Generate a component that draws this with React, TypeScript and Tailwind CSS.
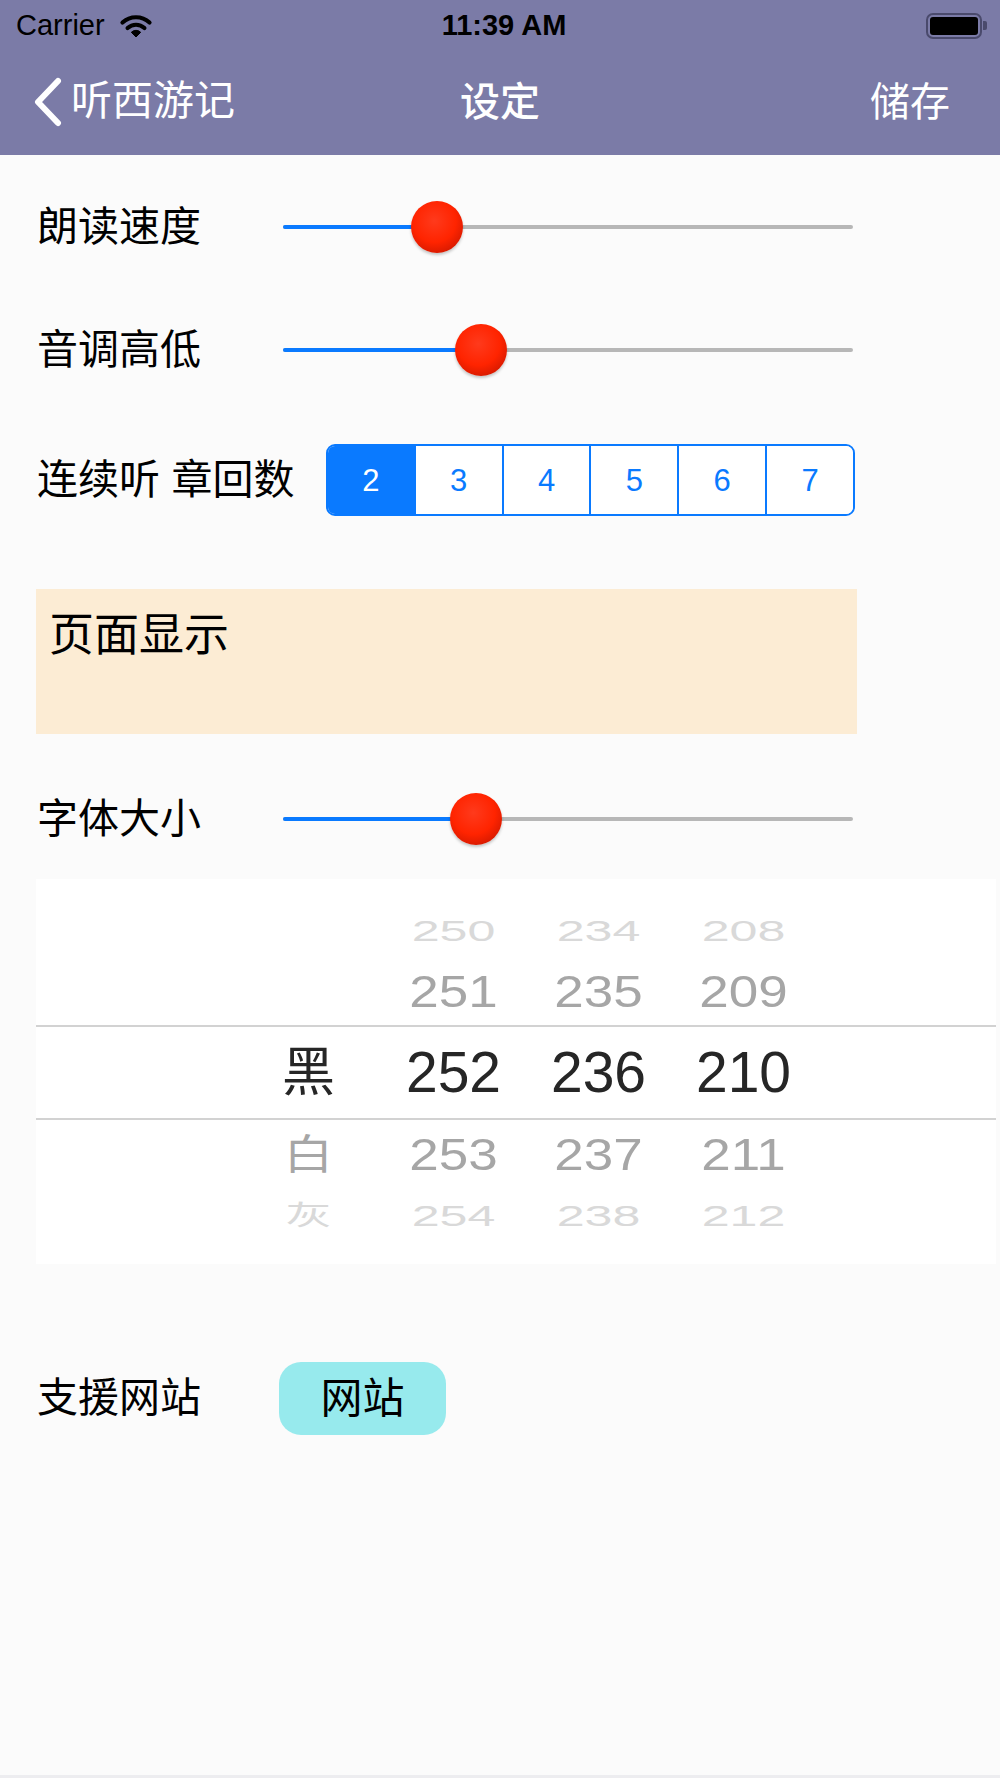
import React from "react";

function Thumb({ left }: { left: number }) {
  return (
    <div
      className="absolute top-1/2 -translate-x-1/2 -translate-y-1/2 w-[52px] h-[52px] rounded-full bg-[radial-gradient(circle_at_45%_38%,#ff3a1c_0%,#ff2400_50%,#e01c00_72%,#a81200_92%,#8a0e00_100%)] shadow-[0_2px_3px_rgba(0,0,0,0.22)]"
      style={{ left }}
    />
  );
}

function Slider({ value }: { value: number }) {
  return (
    <div className="relative w-[570px] h-[56px]">
      <div className="absolute left-0 right-0 top-1/2 -translate-y-1/2 h-[4px] rounded-full bg-[#b7b7b7]" />
      <div
        className="absolute left-0 top-1/2 -translate-y-1/2 h-[4px] rounded-full bg-[#0a7aff]"
        style={{ width: value }}
      />
      <Thumb left={value} />
    </div>
  );
}

function SliderRow({ label, value, className }: { label: string; value: number; className: string }) {
  return (
    <div className={"flex items-center pl-[37px] h-[56px] " + className}>
      <div className="w-[246px] text-[41px] leading-none text-black">{label}</div>
      <Slider value={value} />
    </div>
  );
}

function Wifi() {
  return (
    <svg width="34" height="25" viewBox="0 0 34 25" className="ml-[14px]">
      <path d="M3.5 9.5 A20 20 0 0 1 30.5 9.5" fill="none" stroke="#000" strokeWidth="4.2" strokeLinecap="round" />
      <path d="M8.6 15 A12.5 12.5 0 0 1 25.4 15" fill="none" stroke="#000" strokeWidth="4.2" strokeLinecap="round" />
      <path d="M17 24 L12.3 19.3 A6.6 6.6 0 0 1 21.7 19.3 Z" fill="#000" strokeLinejoin="round" stroke="#000" strokeWidth="1" />
    </svg>
  );
}

function Battery() {
  return (
    <div className="flex items-center">
      <div className="w-[56px] h-[26px] rounded-[7px] border-2 border-[#4a4a6c] p-[2px]">
        <div className="w-full h-full rounded-[3px] bg-black" />
      </div>
      <div className="w-[4px] h-[9px] rounded-r-[2px] bg-[#4a4a6c] ml-[1px]" />
    </div>
  );
}

type PRow = { cells: string[]; tone: "far" | "near" | "center"; h: string };

function PickerRow({ cells, tone, h }: PRow) {
  const color =
    tone === "center" ? "text-[#262626]" : tone === "near" ? "text-[#a6a6a6]" : "text-[#d9d9d9]";
  const scale =
    tone === "center" ? "" : tone === "near" ? "scale-x-[0.93] scale-y-[0.78]" : "scale-x-[0.88] scale-y-[0.52]";
  return (
    <div className={"flex items-center pl-[200px] " + h}>
      {cells.map((c, i) => (
        <div key={i} className="w-[145px] flex justify-center">
          <span
            className={
              "inline-block leading-none " +
              color +
              " " +
              scale +
              " " +
              (i === 0 ? "text-[53px]" : "text-[57px]")
            }
          >
            {c}
          </span>
        </div>
      ))}
    </div>
  );
}

export default function App() {
  const segs = ["2", "3", "4", "5", "6", "7"];
  return (
    <div className="w-[1000px] h-[1778px] flex flex-col bg-[#fbfbfb] font-['Liberation_Sans','Noto_Sans_CJK_SC',sans-serif] overflow-hidden">
      {/* Header */}
      <div className="bg-[#7b7ba7] text-white">
        <div className="h-[48px] grid grid-cols-[1fr_auto_1fr] items-center px-[16px] pt-[3px]">
          <div className="flex items-center text-black text-[29px] leading-none">
            <span>Carrier</span>
            <Wifi />
          </div>
          <div className="text-black text-[29px] font-bold leading-none ml-[8px]">11:39 AM</div>
          <div className="flex justify-end mr-[-3px]">
            <Battery />
          </div>
        </div>
        <div className="h-[107px] grid grid-cols-[1fr_auto_1fr] items-center">
          <div className="flex items-center pl-[31px]">
            <svg width="32" height="50" viewBox="0 0 32 50">
              <path d="M27 4 L7 25 L27 46" fill="none" stroke="#fff" strokeWidth="6" strokeLinecap="round" strokeLinejoin="round" />
            </svg>
            <span className="ml-[8px] text-[41px] leading-none">听西游记</span>
          </div>
          <div className="text-[40px] font-medium leading-none">设定</div>
          <div className="flex justify-end pr-[50px] text-[40px] leading-none">储存</div>
        </div>
      </div>

      {/* Body */}
      <div className="flex-1 flex flex-col">
        <SliderRow label="朗读速度" value={154} className="mt-[44px]" />
        <SliderRow label="音调高低" value={198} className="mt-[67px]" />

        <div className="flex items-center pl-[37px] mt-[66px] h-[72px]">
          <div className="w-[289px] text-[41px] leading-none text-black">连续听 章回数</div>
          <div className="flex w-[529px] h-[72px] rounded-[9px] border-2 border-[#0a7aff] overflow-hidden">
            {segs.map((s, i) => (
              <div
                key={s}
                className={
                  "flex-1 flex items-center justify-center text-[31px] leading-none " +
                  (i === 0 ? "bg-[#0a7aff] text-white" : "bg-white text-[#0a7aff] border-l-2 border-[#0a7aff]")
                }
              >
                {s}
              </div>
            ))}
          </div>
        </div>

        <div className="ml-[36px] mt-[73px] w-[821px] h-[145px] bg-[#fcecd4] pl-[13px] pt-[24px]">
          <div className="text-[45px] leading-none text-black">页面显示</div>
        </div>

        <SliderRow label="字体大小" value={193} className="mt-[57px]" />

        <div className="ml-[36px] mt-[32px] w-[960px] h-[385px] bg-white flex flex-col">
          <div className="h-[24px]" />
          <PickerRow cells={["", "250", "234", "208"]} tone="far" h="h-[54px]" />
          <PickerRow cells={["", "251", "235", "209"]} tone="near" h="h-[68px]" />
          <div className="h-[2px] bg-[#d2d2d2]" />
          <PickerRow cells={["黑", "252", "236", "210"]} tone="center" h="h-[91px]" />
          <div className="h-[2px] bg-[#d2d2d2]" />
          <PickerRow cells={["白", "253", "237", "211"]} tone="near" h="h-[68px]" />
          <PickerRow cells={["灰", "254", "238", "212"]} tone="far" h="h-[54px]" />
        </div>

        <div className="flex items-center pl-[37px] mt-[98px] h-[73px]">
          <div className="w-[242px] text-[41px] leading-none text-black">支援网站</div>
          <div className="w-[167px] h-[73px] rounded-[22px] bg-[#97eaed] flex items-center justify-center text-[42px] leading-none text-black">
            网站
          </div>
        </div>
      </div>
      <div className="h-[3px] bg-[#ededf0]" />
    </div>
  );
}
